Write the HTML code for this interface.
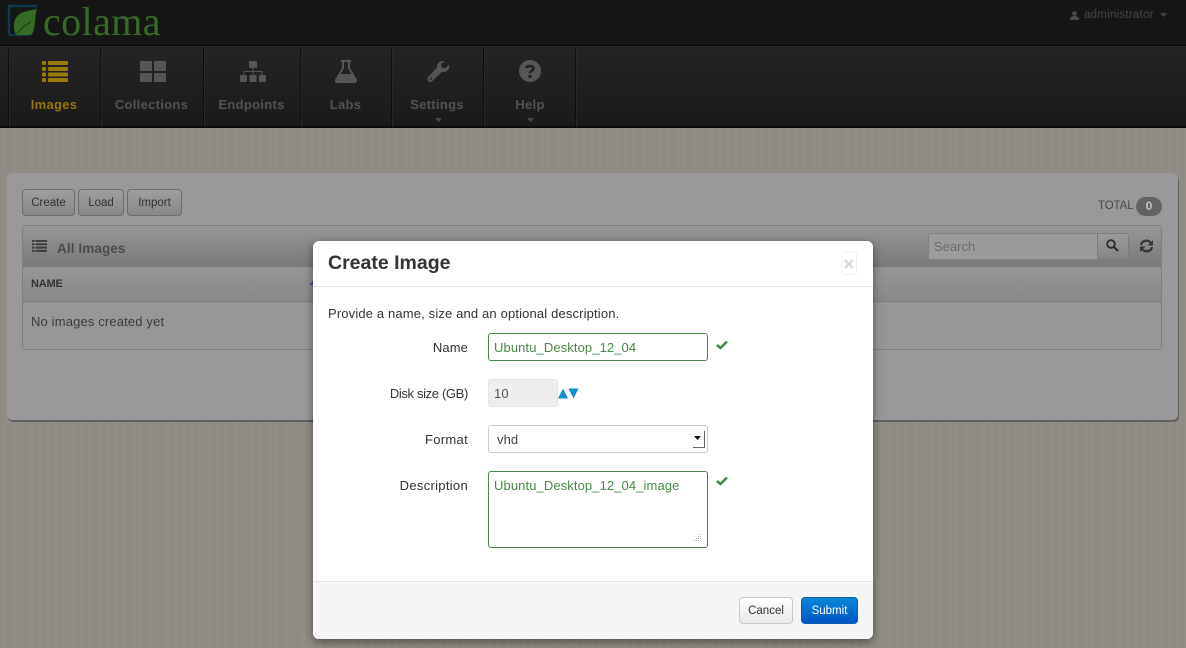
<!DOCTYPE html>
<html><head><meta charset="utf-8"><title>Colama</title>
<style>
*{box-sizing:border-box}
html,body{margin:0;padding:0}
body{width:1186px;height:648px;overflow:hidden;position:relative;font-family:"Liberation Sans",sans-serif;background:#908c85;}
.a{position:absolute}
.t{position:absolute;white-space:nowrap;line-height:1}
#tex{left:0;top:128px;width:1186px;height:520px;background:
repeating-linear-gradient(90deg,rgba(0,0,0,.012) 0 3px,rgba(255,255,255,.01) 3px 7px,rgba(0,0,0,.008) 7px 12px,rgba(255,255,255,.008) 12px 17px);}
#top{left:0;top:0;width:1186px;height:46px;background:#161616;border-bottom:1px solid #0a0a0a}
#nav{left:0;top:46px;width:1186px;height:82px;background:linear-gradient(#242424,#1b1b1b);border-top:1px solid #2a2a2a;border-bottom:2px solid #0c0c0c}
.sep{position:absolute;top:47px;height:80px;width:1px;background:#0f0f0f;box-shadow:1px 0 0 #282828}
.nl{position:absolute;top:97px;height:15px;font-size:13px;font-weight:bold;color:#525252;text-align:center;letter-spacing:.3px;line-height:15px;white-space:nowrap}
.btn{position:absolute;top:189px;height:27px;border:1px solid #6c6c6c;border-radius:4px;background:linear-gradient(#9e9e9e,#878787);font-size:11.5px;color:#333;text-align:center;line-height:27px}
#panel{left:7px;top:173px;width:1171px;height:247px;background:#989898;border-radius:5px;box-shadow:1px 2px 0 #5f5f5f}
#tbl{left:22px;top:225px;width:1140px;height:125px;border:1px solid #7f7f7f;border-radius:4px;background:#969696}
#thd{left:23px;top:226px;width:1138px;height:41px;background:linear-gradient(#969696,#797979);border-radius:3px 3px 0 0}
#th2{left:23px;top:267px;width:1138px;height:35px;background:linear-gradient(#959595,#888);border-bottom:1px solid #7b7b7b}
#modal{left:313px;top:241px;width:560px;height:398px;background:#fff;border-radius:6px;box-shadow:0 3px 9px rgba(0,0,0,.45)}
#foot{left:0;top:340px;width:560px;height:58px;background:#f5f5f5;border-top:1px solid #e2e2e2;border-radius:0 0 6px 6px}
.lab{position:absolute;left:0;width:155px;text-align:right;font-size:13px;color:#333;line-height:16px;white-space:nowrap}
.inp{position:absolute;left:175px;width:220px;background:#fff;border-radius:3px;font-size:13px;line-height:16px;padding-left:5px;letter-spacing:.1px}
.ok{border:1px solid #468847;color:#468847}
</style></head><body>
<div class="a" id="tex"></div>
<div class="a" id="top"></div>
<div class="a" id="nav"></div>
<div class="sep" style="left:8px"></div><div class="sep" style="left:100px"></div><div class="sep" style="left:203px"></div><div class="sep" style="left:300px"></div><div class="sep" style="left:391px"></div><div class="sep" style="left:483px"></div><div class="sep" style="left:575px"></div>

<!-- logo -->
<svg class="a" style="left:7px;top:4px" width="34" height="32" viewBox="0 0 34 32">
<path d="M2 31V2H30" fill="none" stroke="#0e3a4d" stroke-width="2.4"/><path d="M2 31H22" fill="none" stroke="#0e3a4d" stroke-width="2.4"/>
<path d="M30 5C20 7 8 8 7 20C6.500 25 8 31 11 31H24C29 27 27 14 30 5Z" fill="#376b25"/>
<path d="M10 30C14 24 18 21 24 18" stroke="#1b3d14" stroke-width="1" fill="none"/>
</svg>
<div class="t" style="left:43px;top:2px;font:40px/40px 'Liberation Serif',serif;color:#386a25;letter-spacing:.4px">colama</div>

<!-- user -->
<svg class="a" style="left:1070px;top:11px" width="9" height="9" viewBox="0 0 9 9"><circle cx="4.500" cy="2.500" r="2.300" fill="#4a4a4a"/><path d="M0 9C0 6 2 5 4.500 5S9 6 9 9Z" fill="#4a4a4a"/></svg>
<div class="t" style="left:1084px;top:10px;font-size:11.5px;color:#44484e;letter-spacing:.25px">administrator</div>
<svg class="a" style="left:1160px;top:13px" width="7" height="4"><path d="M0 0H7L3.500 4Z" fill="#444"/></svg>

<!-- nav icons -->
<svg class="a" style="left:42px;top:61px" width="26" height="21" viewBox="0 0 26 21" fill="#9a7a08">
<rect x="0" y="0" width="4" height="4" rx="1"/><rect x="6" y="0" width="20" height="4" rx="1"/>
<rect x="0" y="6" width="4" height="4" rx="1"/><rect x="6" y="6" width="20" height="4" rx="1"/>
<rect x="0" y="11.500" width="4" height="4" rx="1"/><rect x="6" y="11.500" width="20" height="4" rx="1"/>
<rect x="0" y="17" width="4" height="4" rx="1"/><rect x="6" y="17" width="20" height="4" rx="1"/></svg>
<svg class="a" style="left:140px;top:61px" width="26" height="21" fill="#565656"><rect width="12" height="10" rx="1"/><rect x="14" width="12" height="10" rx="1"/><rect y="12" width="12" height="9.500" rx="1"/><rect x="14" y="12" width="12" height="9.500" rx="1"/></svg>
<svg class="a" style="left:240px;top:61px" width="26" height="21" viewBox="0 0 26 21" fill="#565656"><rect x="9" width="8" height="7" rx="1"/><rect y="14" width="7" height="7" rx="1"/><rect x="9.500" y="14" width="7" height="7" rx="1"/><rect x="19" y="14" width="7" height="7" rx="1"/><path d="M12.500 7h1v3h9v4h-1v-3h-8v3h-1v-3h-8v3h-1v-4h9z"/></svg>
<svg class="a" style="left:334px;top:60px" width="24" height="23" viewBox="0 0 24 23"><path d="M7 1H17M9 1.500V8L2 20Q1.500 22 3.500 22H20.500Q22.500 22 22 20L15 8V1.500" fill="none" stroke="#565656" stroke-width="2"/><path d="M6 14H18L21.500 21H2.500Z" fill="#565656"/></svg>
<svg class="a" style="left:427px;top:60px" width="23" height="23" viewBox="0 0 24 23"><path d="M23 4.500L18.500 8.500L15 7L14.500 3.500L18.500 1C14 -0.500 10 2.500 10.500 7.500L1.500 17C0 18.500 0.500 20.500 1.500 21.500C3 23 5 22.500 6 21L15.500 12C20.500 13 24 9.500 23 4.500Z" fill="#565656"/><circle cx="4" cy="19" r="1.200" fill="#222"/></svg>
<svg class="a" style="left:519px;top:60px" width="22" height="22" viewBox="0 0 22 22"><circle cx="11" cy="11" r="11" fill="#565656"/><path d="M7.500 8C8 5.500 14.500 5 14.500 8.500C14.500 11 11 10.500 11 13" fill="none" stroke="#1f1f1f" stroke-width="2.600"/><rect x="9.500" y="14.800" width="3" height="3" fill="#1f1f1f"/></svg>

<div class="nl" style="left:8px;width:92px;color:#96760a">Images</div>
<div class="nl" style="left:100px;width:103px">Collections</div>
<div class="nl" style="left:203px;width:97px">Endpoints</div>
<div class="nl" style="left:300px;width:91px">Labs</div>
<div class="nl" style="left:391px;width:92px">Settings</div>
<div class="nl" style="left:484px;width:92px">Help</div>
<svg class="a" style="left:435px;top:118px" width="7" height="4"><path d="M0 0H7L3.500 4Z" fill="#484848"/></svg>
<svg class="a" style="left:527px;top:118px" width="7" height="4"><path d="M0 0H7L3.500 4Z" fill="#484848"/></svg>

<!-- panel -->
<div class="a" id="panel"></div>
<div class="btn" style="left:22px;width:53px">Create</div>
<div class="btn" style="left:78px;width:46px">Load</div>
<div class="btn" style="left:127px;width:55px">Import</div>
<div class="t" style="left:1098px;top:201px;font-size:11.5px;color:#4a4a4a;letter-spacing:-.1px">TOTAL</div>
<div class="a" style="left:1136px;top:197px;width:26px;height:19px;border-radius:10px;background:#626262;color:#c4c4c4;font-size:12px;font-weight:bold;text-align:center;line-height:18px">0</div>
<div class="a" id="tbl"></div>
<div class="a" id="thd"></div>
<div class="a" id="th2"></div>
<svg class="a" style="left:32px;top:240px" width="15" height="12" viewBox="0 0 15 12" fill="#3d3d3d"><rect width="2.500" height="2" /><rect x="3.500" width="11.500" height="2"/><rect y="3.300" width="2.500" height="2"/><rect x="3.500" y="3.300" width="11.500" height="2"/><rect y="6.600" width="2.500" height="2"/><rect x="3.500" y="6.600" width="11.500" height="2"/><rect y="9.900" width="2.500" height="2"/><rect x="3.500" y="9.900" width="11.500" height="2"/></svg>
<div class="t" style="left:57px;top:242px;font-size:13.500px;font-weight:bold;color:#4c4c4c;letter-spacing:.1px">All Images</div>
<div class="t" style="left:31px;top:279px;font-size:11px;font-weight:bold;color:#333;letter-spacing:-.2px">NAME</div>
<svg class="a" style="left:309px;top:280px" width="5" height="5"><path d="M5 0V5H0Z" fill="#4a4a8a"/></svg>
<div class="t" style="left:31px;top:315px;font-size:13px;color:#3d3d3d;letter-spacing:.15px">No images created yet</div>
<div class="a" style="left:928px;top:233px;width:170px;height:27px;background:#9b9b9b;border:1px solid #838383;border-radius:3px 0 0 3px;color:#6a6a6a;font-size:13px;line-height:25px;padding-left:5px">Search</div>
<div class="a" style="left:1097px;top:233px;width:32px;height:27px;background:linear-gradient(#9a9a9a,#858585);border:1px solid #7c7c7c;border-radius:0 3px 3px 0"></div>
<svg class="a" style="left:1106px;top:239px" width="13" height="13" viewBox="0 0 13 13"><circle cx="5" cy="5" r="3.800" fill="none" stroke="#2f2f2f" stroke-width="1.800"/><path d="M8 8L12 12" stroke="#2f2f2f" stroke-width="2.200"/></svg>
<svg class="a" style="left:1139px;top:239px" width="15" height="14" viewBox="0 0 15 14"><path d="M2 6C2.500 2 8 0 11.500 3.500" fill="none" stroke="#333" stroke-width="2.200"/><path d="M14 1V6.500H8.500Z" fill="#333"/><path d="M13 8C12.500 12 7 14 3.500 10.500" fill="none" stroke="#333" stroke-width="2.200"/><path d="M1 13V7.500H6.500Z" fill="#333"/></svg>

<!-- modal -->
<div class="a" id="modal">
<div class="t" style="left:15px;top:12px;font-size:19.5px;line-height:20px;font-weight:bold;color:#333">Create Image</div>
<div class="a" style="left:528px;top:10px;width:16px;height:24px;border:1px solid #f1f1f1;border-radius:4px"></div>
<svg class="a" style="left:531px;top:18px" width="10" height="10"><path d="M1 1L9 9M9 1L1 9" stroke="#d4d4d4" stroke-width="2.200"/></svg>
<div class="a" style="left:0;top:45px;width:560px;height:1px;background:#e8e8e8"></div>
<div class="t" style="left:15px;top:65px;font-size:13px;line-height:15px;color:#333;letter-spacing:.15px">Provide a name, size and an optional description.</div>

<div class="lab" style="top:99px;letter-spacing:.1px">Name</div>
<div class="inp ok" style="top:92px;height:28px;line-height:27px">Ubuntu_Desktop_12_04</div>
<svg class="a" style="left:403px;top:99px" width="12" height="10" viewBox="0 0 12 10"><path d="M1 5L4.500 8L11 1.500" fill="none" stroke="#468847" stroke-width="2.600"/></svg>

<div class="lab" style="top:145px;letter-spacing:-.35px">Disk size (GB)</div>
<div class="inp" style="top:138px;width:70px;height:28px;line-height:28px;background:#eee;color:#555;border:1px solid #e4e4e4">10</div>
<svg class="a" style="left:245px;top:147px" width="21" height="11" viewBox="0 0 21 11"><path d="M0 10.500L5 .5L10 10.500Z" fill="#0a8fd0"/><path d="M10.500 .5H20.500L15.500 10.500Z" fill="#0a8fd0"/></svg>

<div class="lab" style="top:191px;letter-spacing:.3px">Format</div>
<div class="inp" style="top:184px;height:28px;line-height:27px;border:1px solid #ccc;color:#444;padding-left:8px">vhd</div>
<svg class="a" style="left:378px;top:190px" width="15" height="18"><path d="M13.500 0V16.500H2" fill="none" stroke="#666" stroke-width="1"/><path d="M3 5H10L6.500 9Z" fill="#111"/></svg>

<div class="lab" style="top:237px;letter-spacing:.3px">Description</div>
<div class="inp ok" style="top:230px;height:77px;padding-top:6px">Ubuntu_Desktop_12_04_image</div>
<svg class="a" style="left:380px;top:292px" width="10" height="10"><g fill="#a8a8a8"><rect x="7" y="1" width="1" height="1"/><rect x="5" y="3" width="1" height="1"/><rect x="7" y="3" width="1" height="1"/><rect x="3" y="5" width="1" height="1"/><rect x="5" y="5" width="1" height="1"/><rect x="7" y="5" width="1" height="1"/><rect x="1" y="7" width="1" height="1"/><rect x="3" y="7" width="1" height="1"/><rect x="5" y="7" width="1" height="1"/><rect x="7" y="7" width="1" height="1"/></g></svg>
<svg class="a" style="left:403px;top:235px" width="12" height="10" viewBox="0 0 12 10"><path d="M1 5L4.500 8L11 1.500" fill="none" stroke="#468847" stroke-width="2.600"/></svg>

<div class="a" id="foot">
<div class="a" style="left:426px;top:15px;width:54px;height:27px;border:1px solid #c8c8c8;border-radius:4px;background:linear-gradient(#fff,#e8e8e8);font-size:11.500px;color:#333;text-align:center;line-height:26px">Cancel</div>
<div class="a" style="left:488px;top:15px;width:57px;height:27px;border:1px solid #0a5fb0;border-radius:4px;background:linear-gradient(#0a88d8,#0054c4);font-size:11.500px;color:#fff;text-align:center;line-height:26px">Submit</div>
</div>
</div>
</body></html>
